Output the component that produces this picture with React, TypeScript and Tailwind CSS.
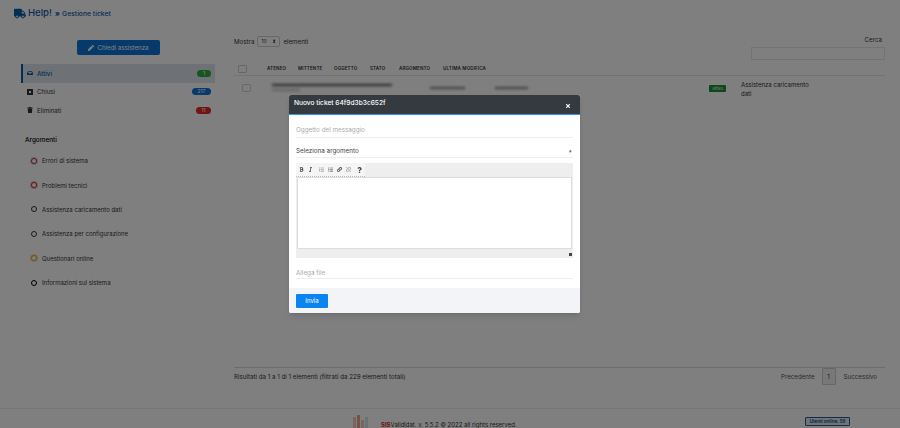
import React from "react";
import {
  FaBold,
  FaInbox,
  FaItalic,
  FaLink,
  FaListOl,
  FaListUl,
  FaPen,
  FaQuestion,
  FaTimes,
  FaTrash,
  FaTruck,
  FaUnlink,
} from "react-icons/fa";

// solid square with a hole, the "closed" folder icon
const ClosedIcon = ({ className }: { className?: string }) => (
  <svg viewBox="0 0 12 12" className={className}>
    <path fillRule="evenodd" fill="currentColor" d="M1 0h10a1 1 0 0 1 1 1v10a1 1 0 0 1-1 1H1a1 1 0 0 1-1-1V1a1 1 0 0 1 1-1zM4 4v4h4V4z" />
  </svg>
);

const menu = [
  { label: "Attivi", count: "1", badge: "bg-[#2fae3a] w-[14px]", Icon: FaInbox, active: true },
  { label: "Chiusi", count: "217", badge: "bg-[#0a74d6] w-[19px]", Icon: ClosedIcon, active: false },
  { label: "Eliminati", count: "11", badge: "bg-[#e8262a] w-[15px]", Icon: FaTrash, active: false },
];

const topics = [
  { label: "Errori di sistema", ring: "border-[#a0304f]", halo: "bg-[#e8c4cf]" },
  { label: "Problemi tecnici", ring: "border-[#d0202f]", halo: "bg-[#f0b8b8]" },
  { label: "Assistenza caricamento dati", ring: "border-[#333333]", halo: "bg-white" },
  { label: "Assistenza per configurazione", ring: "border-[#3a3a3a]", halo: "bg-white" },
  { label: "Questionari online", ring: "border-[#e89a20]", halo: "bg-[#f5dcae]" },
  { label: "Informazioni sul sistema", ring: "border-black", halo: "bg-white" },
];

const columns = [
  { label: "ATENEO", width: "w-[31px]" },
  { label: "MITTENTE", width: "w-[36px]" },
  { label: "OGGETTO", width: "w-[36px]" },
  { label: "STATO", width: "w-[29px]" },
  { label: "ARGOMENTO", width: "w-[44px]" },
  { label: "ULTIMA MODIFICA", width: "" },
];

const toolbar = [FaBold, FaItalic, FaListOl, FaListUl, FaLink, FaUnlink, FaQuestion];

const Sidebar = () => (
  <aside className="w-[194px] ml-[21px] shrink-0">
    <div className="pl-[56px] mb-[9px]">
      <button className="w-[83px] h-[15px] bg-[#0a74d6] rounded-[2px] text-white text-[6.2px] flex items-center justify-center gap-[3px]">
        <FaPen className="w-[6px] h-[6px]" />
        Chiedi assistenza
      </button>
    </div>
    {menu.map(({ label, count, badge, Icon, active }) => (
      <div
        key={label}
        className={`h-[18.5px] flex items-center pr-[4px] text-[6.2px] ${
          active ? "bg-[#dde3ea] border-l-2 border-[#0a5ca8] pl-[4px] text-[#0a5ca8] font-medium" : "pl-[6px] text-[#333333]"
        }`}
      >
        <Icon className="w-[6px] h-[6px] mr-[4px]" />
        <span className="flex-1">{label}</span>
        <span className={`${badge} h-[7px] rounded-full text-white text-[5px] leading-[7px] text-center`}>{count}</span>
      </div>
    ))}
    <h3 className="mt-[15px] ml-[4px] text-[6.4px] leading-[10px] font-medium text-black">Argomenti</h3>
    <ul className="mt-[4px]">
      {topics.map((t) => (
        <li key={t.label} className="h-[24.4px] flex items-center pl-[9px] text-[6px] text-[#333333]">
          <span className={`${t.halo} w-[8px] h-[8px] rounded-full flex items-center justify-center mr-[4px]`}>
            <span className={`${t.ring} w-[6px] h-[6px] rounded-full border-[1.5px] bg-white`} />
          </span>
          {t.label}
        </li>
      ))}
    </ul>
  </aside>
);

const TicketTable = () => (
  <main className="w-[651px] ml-[19px] shrink-0 flex flex-col text-[#333333]">
    <div className="flex justify-between text-[6.2px] h-[24px]">
      <div className="flex items-center gap-[3px] h-[11px] mt-[-4px]">
        Mostra
        <span className="w-[23px] h-[11px] border border-[#d0d0d0] rounded-[2px] flex items-center justify-between px-[3px] text-[5px]">
          <span>10</span>
          <span>⬍</span>
        </span>
        elementi
      </div>
      <div className="flex flex-col items-end w-[134px] mt-[-5px]">
        <span className="leading-[10px] mr-[3px]">Cerca</span>
        <div className="w-full h-[13px] mt-[2px] border border-[#e6e6e6] bg-white" />
      </div>
    </div>
    <div className="flex items-center h-[12px] border-b border-[#e6e6e6] text-[4.6px] font-semibold tracking-[0.1px] text-[#333333] pb-[1px]">
      <span className="w-[9px] h-[8px] ml-[4px] mr-[20px] border border-[#cfcfcf] rounded-[1px]" />
      {columns.map((c) => (
        <span key={c.label} className={c.width}>
          {c.label}
        </span>
      ))}
    </div>
    <div className="flex h-[34px] items-start pt-[4px] relative">
      <span className="w-[9px] h-[8px] ml-[8px] mt-[4px] border border-[#cfcfcf] rounded-[2px] shrink-0" />
      <div className="ml-[21px] mt-[4px] w-[120px] flex flex-col gap-[3px] blur-[1.5px] shrink-0">
        <span className="h-[2px] w-[120px] bg-[#444444]" />
        <span className="h-[2px] w-[28px] bg-[#bdbdbd]" />
      </div>
      <span className="ml-[38px] mt-[7px] h-[2px] w-[35px] bg-[#777777] blur-[1.5px] shrink-0" />
      <span className="ml-[30px] mt-[7px] h-[2px] w-[33px] bg-[#777777] blur-[1.5px] shrink-0" />
      <span className="ml-[181px] mt-[5px] w-[17px] h-[7px] bg-[#1c8f35] text-white text-[4px] leading-[7px] text-center rounded-[1px] shrink-0">
        Attivo
      </span>
      <span className="ml-[15px] w-[72px] text-[6px] leading-[9px] shrink-0">Assistenza caricamento dati</span>
    </div>
    <div className="h-[258px] border-b border-[#d9d9d9]" />
    <div className="flex items-center justify-between h-[17px] text-[6.2px]">
      <span>Risultati da 1 a 1 di 1 elementi (filtrati da 229 elementi totali)</span>
      <div className="flex items-center">
        <span className="text-[#555555]">Precedente</span>
        <span className="ml-[7px] w-[14px] h-[17px] bg-[#f0f0f0] border border-[#cccccc] flex items-center justify-center rounded-[1px]">1</span>
        <span className="ml-[8px] mr-[8px] text-[#555555]">Successivo</span>
      </div>
    </div>
  </main>
);

const Footer = () => (
  <footer className="absolute left-0 right-0 top-[408px] h-[20px] border-t border-[#ececec] overflow-hidden">
    <div className="absolute left-[353px] top-[6px] flex items-end gap-[1px] h-[14px]">
      <span className="w-[3px] h-[12px] bg-[#f0c8c0]" />
      <span className="w-[3px] h-[14px] bg-[#f0a090]" />
      <span className="w-[3px] h-[9px] bg-[#f0c8c0]" />
      <span className="w-[3px] h-[12px] bg-[#cfe8e4]" />
    </div>
    <div className="absolute left-[381px] top-[11px] text-[6px] leading-[10px] text-[#333333] whitespace-nowrap">
      <span className="text-[#e0242a] font-bold">SIS</span>Valididat. v. 5.5.2 © 2022 all rights reserved.
    </div>
    <div className="absolute left-[805px] top-[8px] w-[45px] h-[9px] bg-[#dce8f5] border border-[#2a5a8a] text-[#0a3f75] text-[4.5px] font-semibold leading-[7px] text-center rounded-[1px]">
      Utenti online: 59
    </div>
  </footer>
);

const Modal = () => (
  <div className="absolute left-[289px] top-[95px] w-[291px] h-[218px] bg-white rounded-[2px] shadow-md flex flex-col overflow-hidden">
    <div className="h-[20px] shrink-0 bg-[#343a40] border-b border-[#2b9be8] flex items-center justify-between pl-[5px] pr-[9px] pb-[2px] text-white text-[6.6px] font-medium">
      <span>Nuovo ticket 64f9d3b3c652f</span>
      <FaTimes className="w-[6px] h-[6px] mt-[4px]" />
    </div>
    <div className="flex-1 px-[7px] text-[6.3px]">
      <div className="h-[23px] pb-[2px] border-b border-[#eeeeee] flex items-end text-[#aaaaaa]">Oggetto del messaggio</div>
      <div className="h-[20px] pb-[1px] border-b border-[#eeeeee] flex items-end justify-between text-[#444444]">
        Seleziona argomento
        <span className="text-[5px] text-[#555555] mr-[1px] mb-[1px]">▾</span>
      </div>
      <div className="mt-[5px] h-[95px] bg-[#eeeeee] flex flex-col">
        <div className="h-[14px] flex items-center">
          <div className="h-[14px] flex items-center gap-[4px] px-[3px] bg-[#f5f5f5] border-b border-dotted border-[#bbbbbb]">
            {toolbar.map((Icon, i) => (
              <Icon
                key={i}
                className={`w-[5px] h-[5px] ${i === 2 ? "ml-[2px] text-[#888888]" : i === 6 ? "ml-[2px] h-[6px] text-[#444444]" : i === 5 ? "text-[#aaaaaa]" : "text-[#444444]"}`}
              />
            ))}
          </div>
        </div>
        <div className="mx-[1px] h-[72px] bg-white border border-[#dddddd]" />
        <div className="flex-1 flex items-end justify-end pr-[1px] pb-[2px]">
          <span className="w-[3px] h-[3px] bg-[#444444]" />
        </div>
      </div>
      <div className="h-[21px] border-b border-[#eeeeee] flex items-end text-[#aaaaaa]">Allega file</div>
    </div>
    <div className="h-[25px] shrink-0 bg-[#f2f4f7] flex items-center px-[7px]">
      <button className="w-[32px] h-[14px] bg-[#0a84f0] text-white text-[6px] rounded-[1px]">Invia</button>
    </div>
  </div>
);

export default function App() {
  return (
    <div className="relative w-[900px] h-[428px] overflow-hidden bg-white [font-family:Inter,sans-serif]">
      <header className="h-[40px] flex items-start pt-[7px] pl-[14px] text-[#0a5ca8]">
        <FaTruck className="w-[12px] h-[11px] mt-[1px]" />
        <span className="ml-[2px] text-[9.5px] leading-[12px] font-medium">Help!</span>
        <span className="ml-[3px] text-[8px] leading-[12px] font-bold">»</span>
        <span className="ml-[2px] text-[6.8px] leading-[13px] font-medium">Gestione ticket</span>
      </header>
      <div className="flex">
        <Sidebar />
        <TicketTable />
      </div>
      <Footer />
      <div className="absolute inset-0 bg-black/50" />
      <Modal />
    </div>
  );
}
